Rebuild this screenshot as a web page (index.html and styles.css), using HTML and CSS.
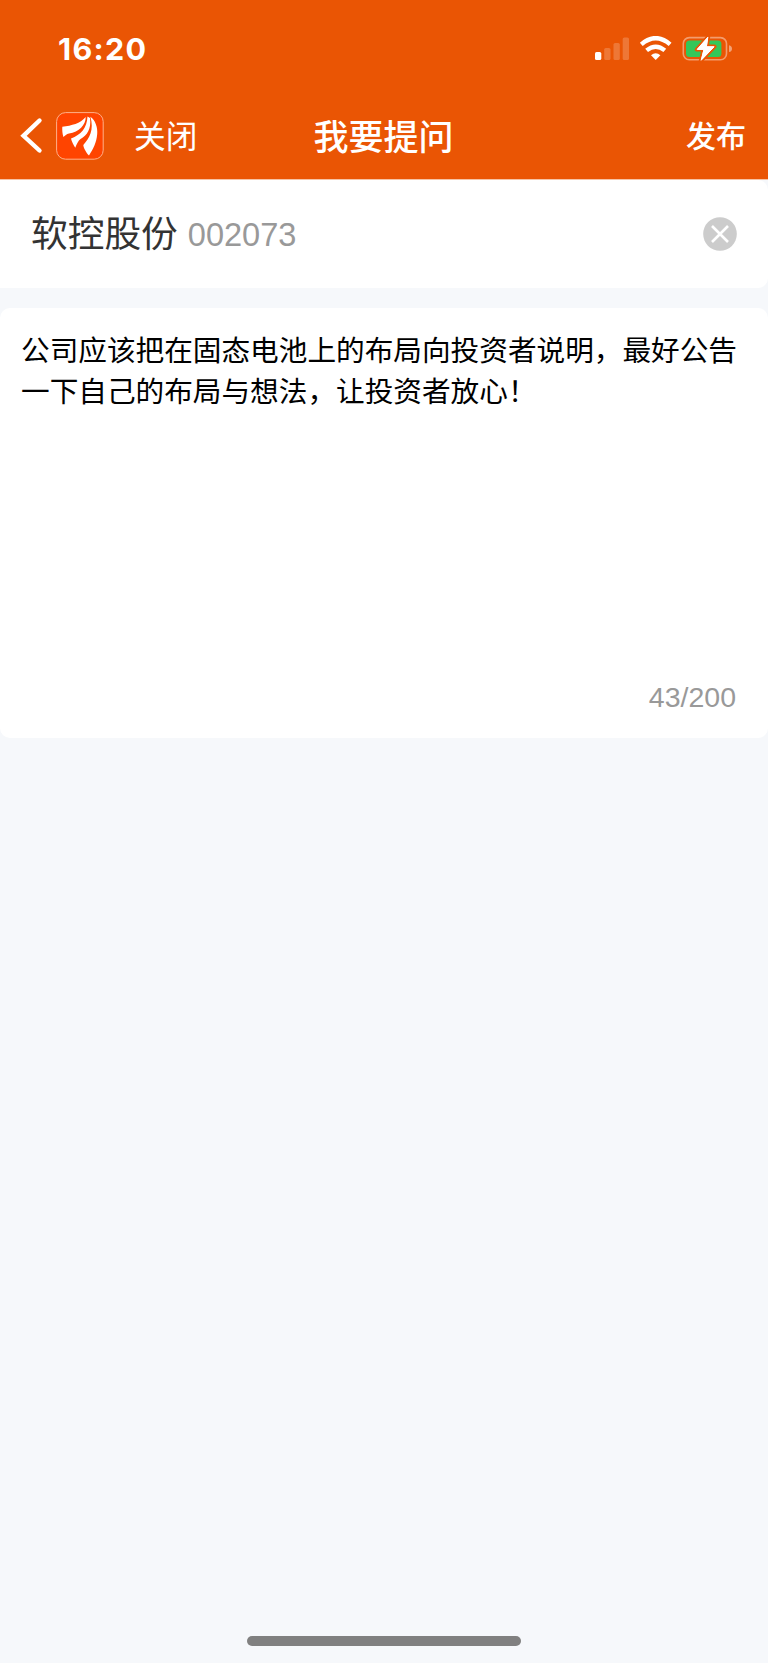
FILE: index.html
```html
<!DOCTYPE html>
<html lang="zh-CN">
<head>
<meta charset="utf-8">
<title>我要提问</title>
<link rel="stylesheet" href="styles.css">
</head>
<body>
<div class="screen">
  <header class="header">
    <div class="status">
      <span class="time">16:20</span>
      <svg class="status-icons" width="140" height="28" viewBox="0 0 140 28">
        <g fill="#fff">
          <rect x="0" y="16" width="6.3" height="8" rx="1.6"/>
          <g opacity=".2">
            <rect x="9.2" y="12" width="6.3" height="12" rx="1.6"/>
            <rect x="18.5" y="7" width="6.3" height="17" rx="1.6"/>
            <rect x="27.7" y="1.5" width="6.3" height="22.5" rx="1.6"/>
          </g>
          <path d="M60.7 24 L56 19.3 Q60.7 15.2 65.4 19.3 Z"/>
        </g>
        <g fill="none" stroke="#fff" stroke-width="4.4">
          <path d="M46.3 8.3 Q60.7 -4 75.1 8.3"/>
          <path d="M51.6 14.4 Q60.7 6.9 69.8 14.4"/>
        </g>
        <rect x="88.3" y="1.6" width="43.2" height="22.2" rx="6" fill="none" stroke="#fff" stroke-opacity=".42" stroke-width="1.6"/>
        <path d="M134 9.3 Q137 10 137 12.7 Q137 15.4 134 16.1 Z" fill="#fff" fill-opacity=".45"/>
        <rect x="91" y="4.5" width="35.4" height="16.4" rx="3.5" fill="#34c759"/>
        <path d="M113.2 .8 L101.8 13.6 H108.5 L105.8 24.8 L119.5 10.5 H111.8 Z" fill="#fff" stroke="#ea5504" stroke-width="4" stroke-linejoin="round" paint-order="stroke"/>
        <path d="M112.8 1.2 L102.2 13.4 H109 L106.2 24.2 L119 10.8 H111.4 Z" fill="#fff" stroke="#fff" stroke-width="1" stroke-linejoin="round"/>
      </svg>
    </div>
    <nav class="nav">
      <div class="nav-left">
        <svg class="back" width="24" height="38" viewBox="0 0 24 38"><path d="M19.5 3.5 L3.5 18.8 L19.5 33.5" fill="none" stroke="#fff" stroke-width="4.4" stroke-linecap="round" stroke-linejoin="miter"/></svg>
        <svg class="logo" width="48" height="48" viewBox="0 0 48 48">
          <rect x=".6" y=".6" width="46.6" height="46.6" rx="9" fill="#ff4400" stroke="#ffb08a" stroke-width="1"/>
          <path fill="#fff" d="M6.3 14.8 C16 13.4 24 11.8 29.7 5 C29.8 13 23 20 13 21.5 C10.5 22 9 23.5 7.4 25 C6.4 22 6.1 18 6.3 14.8Z"/>
          <path fill="#fff" d="M31.5 4.4 L34 6 C35.5 17 31 23.5 24.5 27 C22.2 28.8 20.7 32 19.3 35.8 C17.7 33.5 15.5 29 15 26.5 C25 22.5 31 16 31.5 4.4Z"/>
          <path fill="#fff" d="M34.4 4.7 C39.5 8 41.8 16 41.2 22 C40.5 31 37 37 33 43.5 C30.3 40.8 27.5 36 27.3 33 C33.5 26 38.2 18 34.4 4.7Z"/>
        </svg>
        <span class="close">关闭</span>
      </div>
      <h1 class="title">我要提问</h1>
      <span class="publish">发布</span>
    </nav>
  </header>
  <section class="stock">
    <span class="stock-name">软控股份</span>
    <span class="stock-code">002073</span>
    <svg class="clear" width="34" height="34" viewBox="0 0 34 34"><circle cx="17" cy="17" r="16.8" fill="#ccc"/><path d="M9 9 L25 25 M25 9 L9 25" stroke="#fff" stroke-width="2.6"/></svg>
  </section>
  <section class="question">
    <p class="text">公司应该把在固态电池上的布局向投资者说明，最好公告<br>一下自己的布局与想法，让投资者放心！</p>
    <span class="count">43/200</span>
  </section>
  <div class="home"></div>
</div>
</body>
</html>
```
FILE: styles.css
```css
* { box-sizing: border-box; }
body { margin: 0; font-family: "Liberation Sans", "Noto Sans CJK SC", sans-serif; }
.screen { width: 768px; height: 1663px; background: #f6f8fb; display: flex; flex-direction: column; }
.header { height: 180px; background: #ea5504; border-bottom: 1px solid #f6c3a5; color: #fff; }
.status { height: 94px; display: flex; justify-content: space-between; padding: 36px 33px 0 58px; }
.time { font: 700 30.5px/26px Inter, sans-serif; letter-spacing: 1.3px; }
.status-icons { display: block; }
.nav { height: 85px; display: grid; grid-template-columns: 1fr auto 1fr; align-items: center; padding: 0 22px 0 20px; }
.nav-left { display: flex; align-items: center; }
.back, .logo { margin-bottom: 2px; }
.logo { margin-left: 12px; }
.close { margin-left: 30px; font-size: 31.7px; line-height: 48px; }
.title { margin: 0; padding: 2px 0 0 1px; font-size: 35px; font-weight: 500; line-height: 48px; }
.publish { justify-self: end; font-size: 30px; font-weight: 500; line-height: 48px; }
.stock { height: 108px; background: #fff; border-radius: 0 10px 10px 0; display: flex; align-items: center; padding: 0 31px 0 31px; }
.stock-name { padding-top: 2px; font-size: 36.7px; color: #333; line-height: 54px; }
.stock-code { padding-top: 2px; margin-left: 10px; font-size: 32.6px; color: #999; line-height: 54px; }
.clear { margin-left: auto; }
.question { height: 430px; margin-top: 20px; background: #fff; border-radius: 10px; display: flex; flex-direction: column; justify-content: space-between; padding: 23px 0 22px 21px; }
.text { margin: 0; font-size: 28.65px; line-height: 41px; color: #000; white-space: nowrap; }
.count { align-self: flex-end; margin-right: 32px; font-size: 28.5px; line-height: 38px; color: #999; }
.home { width: 274px; height: 10px; border-radius: 5px; background: #808080; margin: auto auto 17px 247px; }
```
